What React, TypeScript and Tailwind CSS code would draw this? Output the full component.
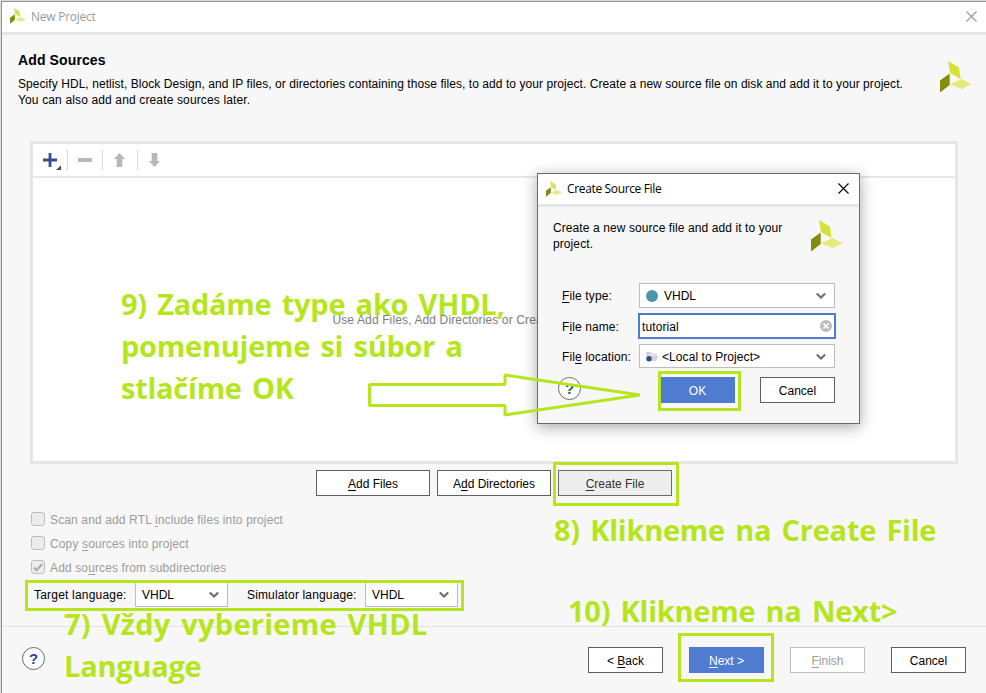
import React from "react";

const ui = "font-['Liberation_Sans',Arial,sans-serif] text-[12px] leading-[16px]";

function Logo({ className, soft }: { className?: string; soft?: boolean }) {
  return (
    <svg className={className} viewBox="0 0 32 32">
      <path d="M8 0 19 6.5 20.5 18 10 12Z" fill={soft ? "#dbe05a" : "#d7e138"} />
      <path d="M0 19.5 9.7 12.5V24L0 31.5Z" fill="#868b0c" />
      <path d="M9.5 23.5 21.5 18 31.5 23.2 22 28Z" fill={soft ? "#e6e992" : "#e4ea7c"} />
    </svg>
  );
}

function U({ children }: { children: React.ReactNode }) {
  return (
    <span className="underline decoration-1 underline-offset-2 [text-decoration-skip-ink:none]">{children}</span>
  );
}

function Close({ className }: { className?: string }) {
  return (
    <svg className={className} viewBox="0 0 11 11" fill="none" stroke="currentColor" strokeWidth="1.1">
      <path d="M.5.5l10 10M10.500.5l-10 10" />
    </svg>
  );
}

function Chevron() {
  return (
    <svg className="h-[7px] w-[10px]" viewBox="0 0 10 7" fill="none" stroke="#6e6e6e" strokeWidth="2.2">
      <path d="M.8 1.500 5 5.500 9.200 1.500" />
    </svg>
  );
}

function Help() {
  return (
    <div className="flex h-[23px] w-[23px] items-center justify-center rounded-full border border-[#6a6a6a] bg-white">
      <span className="font-['Liberation_Sans',Arial,sans-serif] text-[15px] leading-[16px] font-bold text-[#2d4a86]">?</span>
    </div>
  );
}

function Button({ className = "", children }: { className?: string; children: React.ReactNode }) {
  return (
    <button className={`flex h-[26px] items-center justify-center border pt-[2px] whitespace-pre ${className}`}>
      <span>{children}</span>
    </button>
  );
}

function Select({ className = "", children }: { className?: string; children: React.ReactNode }) {
  return (
    <div className={`flex items-center border border-[#bcbcbc] bg-white ${className}`}>
      <div className="flex flex-1 items-center">{children}</div>
      <Chevron />
    </div>
  );
}

function Check({ checked, children }: { checked?: boolean; children: React.ReactNode }) {
  return (
    <div className="flex h-6 items-center gap-[5px] text-[#9c9c9c]">
      <span className="flex h-[14px] w-[14px] items-center justify-center rounded-[3px] border border-[#bcbcbc] bg-[#ebecee]">
        {checked && (
          <svg className="h-[9px] w-[10px]" viewBox="0 0 10 9" fill="none" stroke="#adadad" strokeWidth="2.2">
            <path d="M.8 4.500 3.700 7.200 9.200 1" />
          </svg>
        )}
      </span>
      <span className="relative top-px tracking-[0.13px]">{children}</span>
    </div>
  );
}

function Note({ className = "", children }: { className?: string; children: React.ReactNode }) {
  return (
    <div
      className={`absolute font-['Open_Sans',Calibri,sans-serif] text-[29px] leading-[42px] font-bold tracking-[-0.25px] [word-spacing:3px] whitespace-pre text-[#b5e61d] ${className}`}
    >
      {children}
    </div>
  );
}

function Mark({ className }: { className: string }) {
  return <div className={`absolute border-[3px] border-[#b5e61d] ${className}`} />;
}

function CreateSourceDialog() {
  return (
    <div className="absolute top-[173px] left-[537px] flex h-[251px] w-[323px] flex-col border border-[#6b6b6b] bg-[#f7f7f7] shadow-[0_3px_14px_rgba(0,0,0,0.35)]">
      <div className="flex h-[33px] items-center border-b-[3px] border-[#e6e6e6] bg-white pr-[10px] pl-[8px]">
        <Logo soft className="h-4 w-4" />
        <span className="ml-[5px] flex-1 font-['Open_Sans','Segoe_UI',sans-serif] text-[12px] leading-4 tracking-[-0.35px] text-black">
          Create Source File
        </span>
        <Close className="mb-[2px] h-[11px] w-[11px] text-black" />
      </div>
      <div className="flex h-[75px] justify-between pt-[13px] pr-[16px] pl-[15px]">
        <p className="w-[240px] tracking-[0.09px]">
          Create a new source file and add it to your
          <br />
          project.
        </p>
        <Logo className="h-8 w-8" />
      </div>
      <div className="flex flex-col pl-6">
        <div className="flex h-[27px] items-center">
          <span className="w-[77px] tracking-[0.13px]"><U>F</U>ile type:</span>
          <Select className="h-[25px] w-[196px] pr-[8px] pl-[6px]">
            <span className="mr-[6px] h-3 w-3 rounded-full bg-[#4b96ad]" />
            <span>VHDL</span>
          </Select>
        </div>
        <div className="mt-[4px] flex h-[26px] items-center">
          <span className="w-[76px] pt-px tracking-[0.1px]">F<U>i</U>le name:</span>
          <div className="flex h-[26px] w-[198px] items-center justify-between border-2 border-[#4f7bd0] bg-white pr-[2px] pl-[2px]">
            <span className="pt-px tracking-[0.1px]">tutorial</span>
            <svg className="h-3 w-3" viewBox="0 0 12 12">
              <circle cx="6" cy="6" r="6" fill="#bdbdbd" />
              <path d="M3.500 3.500l5 5m0-5l-5 5" stroke="#fff" strokeWidth="1.500" />
            </svg>
          </div>
        </div>
        <div className="mt-[5px] flex h-6 items-center">
          <span className="w-[77px] pt-px tracking-[0.12px]">Fil<U>e</U> location:</span>
          <Select className="h-6 w-[196px] pr-[8px] pl-[6px]">
            <svg className="mr-[4px] h-[11px] w-3" viewBox="0 0 12 11">
              <path d="M0 1h4.500l1.500 1.500h5V5H12l-1.500 5H1Z" fill="#d2d4d7" />
              <path d="M2 4h9" stroke="#f4f4f4" />
              <circle cx="3" cy="7.800" r="2.700" fill="#2f4f8c" />
            </svg>
            <span className="pt-px tracking-[0.08px]">&lt;Local to Project&gt;</span>
          </Select>
        </div>
      </div>
      <div className="mt-[9px] flex pl-[20px]">
        <Help />
        <Button className="ml-[80px] w-[74px] border-[#4f7bd0] bg-[#4f7bd0] pr-px text-white">OK</Button>
        <Button className="ml-[25px] w-[75px] border-[#5f5f5f] bg-white">Cancel</Button>
      </div>
    </div>
  );
}

export default function App() {
  return (
    <div className={`relative h-[693px] w-[986px] overflow-hidden bg-[#dcdcdc] pt-px pl-px text-black ${ui}`}>
      <div className="flex h-[692px] w-[985px] flex-col border-t border-l border-[#929292] bg-[#f7f7f7]">
        <header className="flex h-[33px] shrink-0 items-center border-b-[3px] border-[#e6e6e6] bg-white pr-[9px] pl-[8px] text-[#999]">
          <Logo soft className="mb-[2px] h-4 w-4" />
          <span className="mb-px ml-[5px] flex-1 font-['Open_Sans','Segoe_UI',sans-serif] text-[12px] leading-4 tracking-[-0.25px]">
            New Project
          </span>
          <Close className="mb-[2px] h-[11px] w-[11px]" />
        </header>

        <section className="flex h-[106px] shrink-0 justify-between pr-[14px] pl-4">
          <div>
            <h1 className="mt-[17px] text-[14px] leading-[16px] font-bold tracking-[0.12px]">Add Sources</h1>
            <p className="mt-[8px] whitespace-nowrap tracking-[0.062px]">
              Specify HDL, netlist, Block Design, and IP files, or directories containing those files, to add to your
              project. Create a new source file on disk and add it to your project.
              <br />
              <span className="tracking-[0.14px]">You can also add and create sources later.</span>
            </p>
          </div>
          <Logo className="mt-[26px] h-8 w-8 shrink-0" />
        </section>

        <section className="ml-7 flex h-[323px] w-[928px] shrink-0 flex-col border-[3px] border-[#e6e6e6] bg-white">
          <div className="flex h-[34px] items-center border-b-2 border-[#e6e6e6]">
            <div className="flex h-5 w-[35px] items-center border-r border-[#d9d9d9] pl-[10px]">
              <svg className="h-[20px] w-[20px]" viewBox="0 0 20 20">
                <path d="M7 3v14M0 10h14" stroke="#34508a" strokeWidth="2.800" />
                <path d="M18 15.500V20h-5Z" fill="#444" />
              </svg>
            </div>
            <div className="flex h-5 w-[35px] items-center border-r border-[#d9d9d9] pl-[10px]">
              <span className="h-1 w-[14px] bg-[#b8b8b8]" />
            </div>
            <div className="flex h-5 w-[35px] items-center border-r border-[#d9d9d9] pl-[11px]">
              <svg className="h-[14px] w-[11px]" viewBox="0 0 11 14"><path d="M5.500 0 11 6H8.300v8H2.700V6H0Z" fill="#b8b8b8" /></svg>
            </div>
            <div className="flex h-5 w-[35px] items-center pl-[11px]">
              <svg className="h-[14px] w-[11px]" viewBox="0 0 11 14"><path d="M5.500 14 0 8h2.700V0h5.600v8H11Z" fill="#b8b8b8" /></svg>
            </div>
          </div>
          <div className="flex flex-1 items-center justify-center pt-px whitespace-nowrap text-[#7d7d7d]">
            <span className="tracking-[0.13px]">Use Add Files, Add Directories or Create File buttons below</span>
          </div>
        </section>

        <div className="mt-[6px] ml-[314px] flex shrink-0 gap-[7px]">
          <Button className="w-[114px] border-[#5f5f5f] bg-white"><U>A</U>dd Files</Button>
          <Button className="w-[114px] border-[#5f5f5f] bg-white">A<U>d</U>d Directories</Button>
          <Button className="w-[114px] border-[#6a6a6a] bg-[#ededed] text-[#333]"><U>C</U>reate File</Button>
        </div>

        <div className="mt-[11px] ml-[29px] flex flex-col">
          <Check>Scan and add RTL <U>i</U>nclude files into project</Check>
          <Check>Copy <U>s</U>ources into project</Check>
          <Check checked>Add so<U>u</U>rces from subdirectories</Check>
        </div>

        <div className="mt-[3px] ml-8 flex h-[25px] shrink-0 items-center">
          <span className="w-[101px] tracking-[0.2px]">Target language:</span>
          <Select className="h-[25px] w-[93px] pr-[8px] pl-[6px]">VHDL</Select>
          <span className="ml-[19px] w-[118px] tracking-[0.15px]">Simulator language:</span>
          <Select className="h-[25px] w-[93px] pr-[8px] pl-[6px]">VHDL</Select>
        </div>

        <footer className="mt-[19px] flex flex-1 border-t border-[#e3e3e3] pt-5 pl-5">
          <Help />
          <Button className="ml-[543px] w-[75px] border-[#5f5f5f] bg-white">&lt; <U>B</U>ack</Button>
          <Button className="ml-[26px] w-[75px] border-[#4f7bd0] bg-[#4f7bd0] text-white"><U>N</U>ext &gt;</Button>
          <Button className="ml-[26px] w-[75px] border-[#bdbdbd] bg-white text-[#9c9c9c]"><U>F</U>inish</Button>
          <Button className="ml-[26px] w-[75px] border-[#5f5f5f] bg-white">Cancel</Button>
        </footer>
      </div>

      <CreateSourceDialog />

      <Mark className="top-[580px] left-[25px] h-[31px] w-[439px]" />
      <Mark className="top-[462px] left-[553px] h-[44px] w-[126px]" />
      <Mark className="top-[371px] left-[658px] h-[40px] w-[83px]" />
      <Mark className="top-[633px] left-[678px] h-[49px] w-[96px]" />
      <svg className="absolute top-[370px] left-[365px] h-[50px] w-[280px]" viewBox="365 370 280 50" fill="none">
        <path d="M369.500 384.500H505V375L640 395 505 415V405.500H369.500Z" stroke="#b5e61d" strokeWidth="3" strokeLinejoin="bevel" />
      </svg>
      <Note className="top-[283px] left-[121px]">{"9) Zadáme type ako VHDL,\npomenujeme si súbor a\nstlačíme OK"}</Note>
      <Note className="top-[509px] left-[554px]">8) Klikneme na Create File</Note>
      <Note className="top-[590px] left-[568px]">10) Klikneme na Next&gt;</Note>
      <Note className="top-[603px] left-[64px]">
        <span className="tracking-[0.25px]">7) Vždy vyberieme VHDL</span>
        {"\nLanguage"}
      </Note>
    </div>
  );
}
